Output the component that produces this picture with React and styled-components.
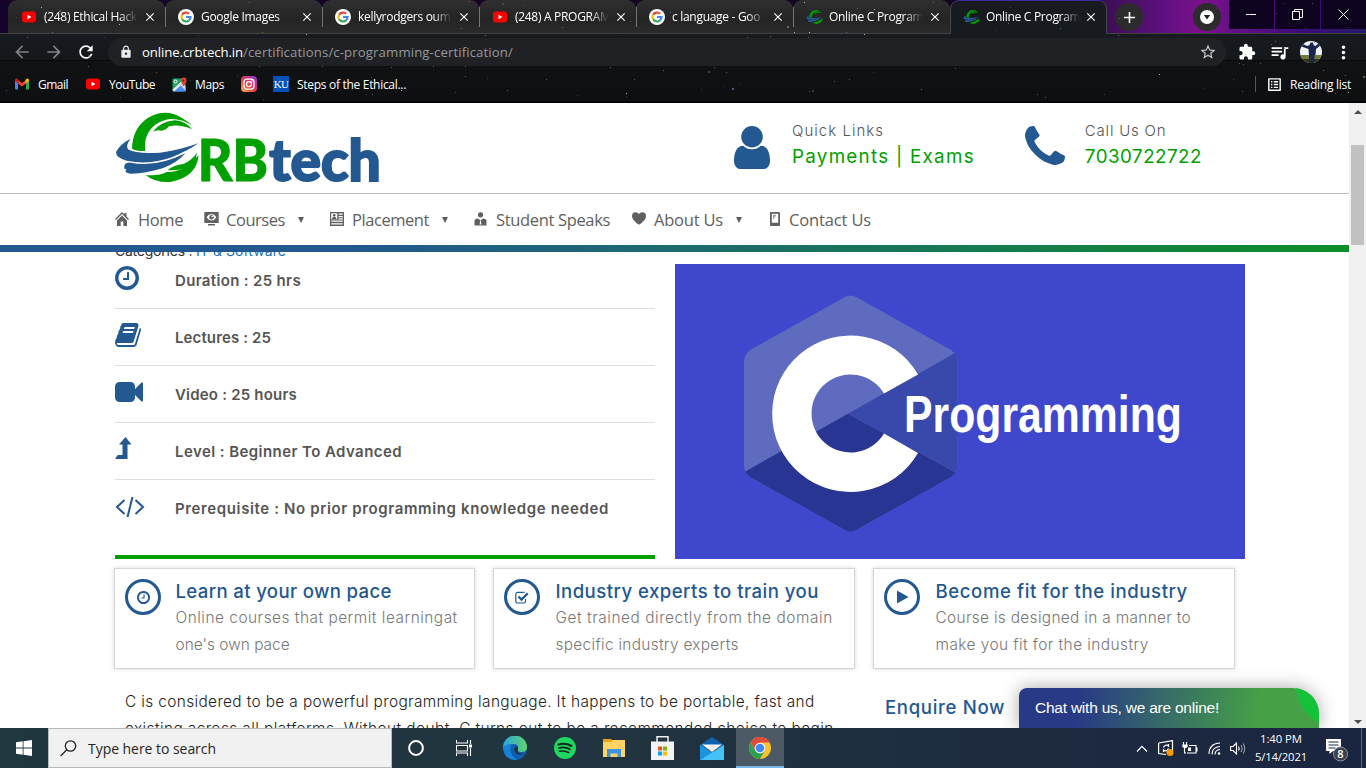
import React from "react";
import styled, { createGlobalStyle, css } from "styled-components";
import {
  MdArrowBack, MdArrowForward, MdRefresh, MdLock, MdStarBorder, MdExtension,
  MdQueueMusic, MdMoreVert, MdClose, MdAdd, MdOutlineListAlt,
} from "react-icons/md";

const UI = `"Open Sans", "Noto Sans", sans-serif`;
const GEO = `Inter, "Open Sans", sans-serif`;
const BLUE = "#235890";
const GREEN = "#00a000";

const Global = createGlobalStyle`
  * { box-sizing: border-box; }
  body { margin: 0; background: #fff; overflow: hidden; }
  svg { display: block; flex: none; }
`;

const Screen = styled.div`
  width: 1366px;
  height: 768px;
  display: flex;
  flex-direction: column;
  overflow: hidden;
  font-family: ${UI};
`;

const T = styled.span`
  white-space: pre;
  letter-spacing: ${(p) => p.$ls || 0}px;
`;

/* ---------- browser ---------- */
const Browser = styled.header`
  position: relative;
  height: 103px;
  flex: none;
  background: linear-gradient(#171a1e 34px, #15181b 60px, #000 60px, #101214 61px, #0d0f11 101px, #000 102px);
  color: #fff;
`;
const Stars = styled.svg`
  position: absolute;
  inset: 0;
  pointer-events: none;
`;
const TabStrip = styled.div`
  height: 34px;
  display: flex;
  align-items: flex-start;
  padding-left: 8px;
  border-bottom: 1px solid #3f4341;
  background: linear-gradient(90deg, #16032a 0, #14041f 950px, #3d0e55 1107px, #5c107c 1160px, #7a128c 1200px, #3d0c78 1300px, #241a6c);
`;
const Tab = styled.div`
  position: relative;
  width: 157px;
  height: 33px;
  flex: none;
  display: flex;
  align-items: center;
  padding: 1px 0 0 13px;
  border-radius: 9px 9px 0 0;
  background: linear-gradient(#2f2f30, #242424 60%, #2b2b2b);
  ${(p) => p.$active && css`
    height: 34px;
    background: #171a1e;
    border: 1px solid #43484a;
    border-top-color: #3d2a9c;
    border-bottom: 0;
    padding: 0 0 1px 12px;
  `}
  ${(p) => p.$line && css`
    &::after { content: ""; position: absolute; right: -1px; top: 7px; width: 1px; height: 20px; background: #75767a; z-index: 1; }
  `}
`;
const TabIcon = styled.div`width: 16px; display: flex; justify-content: center;`;
const TabTitle = styled.div`
  width: 94px;
  margin-left: 7px;
  overflow: hidden;
  font-size: 12px;
  line-height: 18px;
  mask-image: linear-gradient(90deg, #000 80%, transparent 100%);
`;
const TabClose = styled.div`margin-left: ${(p) => (p.$active ? 4 : 5)}px; display: flex; font-size: 14px;`;
const RoundBtn = styled.div`
  width: 28px;
  height: 28px;
  margin: 3px 0 0 ${(p) => p.$ml}px;
  border-radius: 50%;
  background: #2c2c2d;
  display: grid;
  place-items: center;
  font-size: 19px;
`;
const WinControls = styled.div`margin-left: 8px; display: flex; gap: 1px;`;
const WinBtn = styled.div`
  width: 45px;
  height: 29px;
  background: #0f0420;
  display: grid;
  place-items: center;
`;
const Toolbar = styled.div`
  height: 36px;
  display: flex;
  align-items: center;
  padding-left: 6px;
`;
const ToolBtn = styled.div`
  width: 32px;
  display: grid;
  place-items: center;
  font-size: ${(p) => p.$size || 20}px;
  color: ${(p) => (p.$dim ? "#808285" : "#fff")};
`;
const Omnibox = styled.div`
  position: relative;
  width: 1118px;
  height: 28px;
  margin: 0 5px 0 6px;
  border-radius: 14px;
  background: #202124;
  display: flex;
  align-items: center;
  padding: 0 9px 0 11px;
  font-size: 13.2px;
`;
const Url = styled.div`flex: 1; margin-left: 9px; color: #fff;`;
const UrlPath = styled(T)`color: #95989b;`;
const Bookmarks = styled.div`
  height: 28px;
  display: flex;
  align-items: center;
  font-size: 12px;
  padding-left: 15px;
`;
const Bookmark = styled.div`
  display: flex;
  align-items: center;
  gap: ${(p) => p.$gap || 8}px;
  margin-right: ${(p) => p.$mr || 0}px;
`;
const ReadingList = styled.div`
  margin-left: auto;
  padding: 0 15px 0 10px;
  border-left: 1px solid #55585b;
  height: 16px;
  display: flex;
  align-items: center;
  gap: 7px;
  font-size: 12px;
`;

/* ---------- page ---------- */
const Viewport = styled.div`
  position: relative;
  height: 625px;
  display: flex;
  background: #fff;
`;
const Page = styled.div`width: 1349px; height: 625px; overflow: hidden;`;
const Head = styled.div`
  height: 91px;
  border-bottom: 1px solid #bfbfbf;
  display: flex;
  padding-left: 115px;
`;
const Contact = styled.div`display: flex; margin-left: ${(p) => p.$ml}px; padding-top: 18px;`;
const ContactIcon = styled.div`width: ${(p) => p.$w}px; padding-top: ${(p) => p.$top}px;`;
const ContactBody = styled.div`display: flex; flex-direction: column; font-family: ${GEO};`;
const Small = styled(T)`font-size: 15px; line-height: 20px; font-weight: 300; color: #555;`;
const Strong = styled(T)`font-size: 18.8px; line-height: 30px; margin-top: 1px; color: ${GREEN};`;
const Nav = styled.nav`
  height: 51px;
  display: flex;
  align-items: center;
  padding-left: 115px;
  color: #606060;
  font-size: 16.5px;
`;
const NavItem = styled.div`
  display: flex;
  align-items: center;
  width: ${(p) => p.$w}px;
`;
const NavIcon = styled.div`width: ${(p) => p.$w}px; padding-bottom: 2px;`;
const Caret = styled.i`
  margin-left: 13px;
  border: solid transparent;
  border-width: 6px 3.5px 0;
  border-top-color: #5c5c5c;
`;
const Strip = styled.div`height: 7px; background: linear-gradient(90deg, ${BLUE} 25%, #0f8d2a);`;
const Content = styled.main`
  height: 476px;
  overflow: hidden;
  padding-left: 115px;
`;
const Category = styled.div`
  margin-top: -11px;
  height: 20px;
  line-height: 20px;
  font-family: ${GEO};
  font-size: 14px;
  color: #333;
  a { color: #1a75bb; }
`;
const Hero = styled.section`display: flex; gap: 20px; margin-top: 3px; height: 295px;`;
const Specs = styled.div`
  width: 540px;
  height: 295px;
  border-bottom: 4px solid ${GREEN};
`;
const Spec = styled.div`
  height: 57px;
  margin-top: ${(p) => (p.$first ? -12 : 0)}px;
  padding-top: ${(p) => (p.$last ? 0 : 2)}px;
  border-bottom: ${(p) => (p.$last ? 0 : 1)}px solid #ddd;
  display: flex;
  align-items: center;
  font: 600 15px/20px ${GEO};
  color: #555;
`;
const SpecIcon = styled.div`
  width: 60px;
  height: 30px;
  display: flex;
  align-items: center;
  padding-bottom: ${(p) => p.$up}px;
  color: ${BLUE};
`;
const Cards = styled.section`display: flex; gap: 18px; margin: 9px 0 0 -1px;`;
const Card = styled.div`
  width: ${(p) => p.$w}px;
  height: 101px;
  border: 1px solid #d6d6d6;
  box-shadow: 0 0 4px rgba(0, 0, 0, 0.16);
  padding: 10px 0 0 10px;
  display: flex;
`;
const Ring = styled.div`
  width: 36px;
  height: 36px;
  border: 3px solid ${BLUE};
  border-radius: 50%;
  display: grid;
  place-items: center;
  color: ${BLUE};
  margin-right: ${(p) => p.$mr}px;
`;
const CardBody = styled.div`display: flex; flex-direction: column; font-family: ${GEO};`;
const CardTitle = styled(T)`font-size: 18.6px; line-height: 24px; margin-bottom: 1px; font-weight: 500; color: ${BLUE};`;
const CardText = styled(T)`font-size: 15.4px; line-height: 27px; font-weight: 300; color: #777;`;
const Lower = styled.section`display: flex; padding: 19px 0 0 10px; font-family: ${GEO};`;
const Para = styled.div`
  width: 760px;
  font-size: 15.4px;
  line-height: 27px;
  font-weight: 300;
  color: #222;
  display: flex;
  flex-direction: column;
`;
const Enquire = styled(T)`font-size: 18.6px; line-height: 38px; font-weight: 500; color: ${BLUE};`;
const ScrollTrack = styled.div`
  width: 17px;
  background: #f1f1f1;
  display: flex;
  flex-direction: column;
  align-items: center;
  padding: 7px 0 4px;
`;
const Arrow = styled.i`
  border: solid transparent;
  border-width: 0 4px 4px;
  border-bottom-color: #505050;
  ${(p) => p.$down && css`margin-top: auto; transform: scaleY(-1);`}
`;
const Thumb = styled.div`width: 13px; height: 100px; margin-top: 31px; background: #c1c1c1;`;
const Chat = styled.div`
  position: absolute;
  left: 1019px;
  bottom: 0;
  width: 300px;
  height: 40px;
  border-radius: 8px 26px 0 0;
  overflow: hidden;
  background: linear-gradient(95deg, #283a86 20%, #46a146 80%);
  color: #fff;
  font: 15.5px/40px "Liberation Sans", Arial, sans-serif;
  padding-left: 16px;
`;
const ChatShadow = styled.div`
  position: absolute;
  left: 1019px;
  bottom: 0;
  width: 300px;
  height: 40px;
  border-radius: 8px 26px 0 0;
  box-shadow: 0 0 18px rgba(0, 0, 0, 0.35);
  clip-path: inset(-30px -30px 0 -30px);
`;
const Leaf = styled.svg`position: absolute; right: 0; top: 0;`;

/* ---------- taskbar ---------- */
const Taskbar = styled.footer`
  height: 40px;
  display: flex;
  background: linear-gradient(90deg, #20373f 0, #21343f 45%, #1e2c40 70%, #1a2540);
  color: #fff;
`;
const Start = styled.div`width: 48px; display: grid; place-items: center;`;
const Search = styled.div`
  width: 344px;
  border: 1px solid #b9b9b9;
  background: #f1f1f1;
  display: flex;
  align-items: center;
  padding-left: 11px;
  gap: 11px;
  font-size: 14px;
  color: #262626;
`;
const TaskButton = styled.div`
  width: ${(p) => p.$w || 49}px;
  display: grid;
  place-items: center;
  ${(p) => p.$on && css`background: #4b5a64; border-bottom: 2px solid #76b9ed; padding-top: 2px;`}
`;
const Tray = styled.div`margin-left: auto; display: flex; align-items: center;`;
const TrayIcon = styled.div`width: ${(p) => p.$w || 24}px; display: grid; place-items: center;`;
const Clock = styled.div`
  width: 66px;
  display: flex;
  flex-direction: column;
  align-items: center;
  font-size: 11.3px;
  line-height: 18px;
`;
const Notice = styled.div`width: 46px; display: flex; justify-content: center; padding-top: 4px; margin-right: 1px;`;
const Peek = styled.div`width: 5px; height: 40px; border-left: 1px solid #59647a;`;

/* ---------- drawings ---------- */
const CrescentArt = () => (
  <>
    <g fill={GREEN}>
      <path d="M96 138Q97 78 143 46Q196 14 246 46Q264 56 277 70Q250 48 210 49Q160 56 141 98Q132 120 136 145Q110 146 96 138Z" />
      <path d="M158 88Q178 58 225 53Q256 55 276 80Q240 64 207 71Q196 84 184 84Q170 81 158 88Z" />
      <path d="M137 217Q176 221 200 208Q245 212 296 158Q290 223 212 238Q165 241 137 217Z" />
      <path d="M203 202Q222 187 250 184Q277 172 291 150Q288 184 258 195Q230 205 203 202Z" />
    </g>
    <g fill={BLUE}>
      <path d="M92 108Q60 124 48 148Q48 166 80 174Q150 188 215 164Q268 142 295 122Q238 143 180 150Q110 155 84 140Q76 128 92 108Z" />
      <path d="M73 198Q70 178 92 180Q168 196 256 152Q232 180 190 196Q130 214 92 213Q70 211 79 200Z" />
    </g>
  </>
);
const LogoSvg = styled.svg`margin-top: 8px; overflow: visible;`;
const Logo = () => (
  <LogoSvg width="267" height="73.5" viewBox="45 25 801 220.5">
    <CrescentArt />
    <g fontFamily="Lato, sans-serif" fontWeight="900" fontSize="174">
      <text x="293" y="236" fill={GREEN} stroke={GREEN} strokeWidth="3" textLength="211" lengthAdjust="spacingAndGlyphs">RB</text>
      <text x="508" y="235" fill={BLUE} stroke={BLUE} strokeWidth="6" textLength="334" lengthAdjust="spacingAndGlyphs">tech</text>
    </g>
  </LogoSvg>
);
const CrbIcon = () => <svg width="17" height="16" viewBox="45 20 255 230"><CrescentArt /></svg>;
const YtIcon = () => (
  <svg width="14" height="12" viewBox="0 0 14 12"><rect y=".5" width="14" height="11" rx="3" fill="#f00" /><path d="M5.5 3.7v4.6L9.4 6z" fill="#fff" /></svg>
);
const GoogleIcon = () => (
  <svg width="16" height="16" viewBox="0 0 32 32">
    <circle cx="16" cy="16" r="16" fill="#fff" />
    <g fill="none" strokeWidth="4.4">
      <path d="M8.2 11.5A9 9 0 0 1 22.3 9.6" stroke="#ea4335" />
      <path d="M8.2 20.5A9 9 0 0 1 8.2 11.5" stroke="#fbbc05" />
      <path d="M22 22.7A9 9 0 0 1 8.2 20.5" stroke="#34a853" />
      <path d="M16 16h9A9 9 0 0 1 22 22.7" stroke="#4285f4" />
    </g>
  </svg>
);
const GmailIcon = () => (
  <svg width="14" height="12" viewBox="0 0 28 22">
    <path d="M0 3v17q0 2 2 2h4V9z" fill="#4285f4" /><path d="M28 3v17q0 2-2 2h-4V9z" fill="#34a853" />
    <path d="M6 3v7l8 6 8-6V3l-8 6z" fill="#ea4335" /><path d="M0 4q0-5 5-3.500L7 3v7L0 5z" fill="#c5221f" /><path d="M28 4q0-5-5-3.500L21 3v7l7-5z" fill="#fbbc04" />
  </svg>
);
const MapsIcon = () => (
  <svg width="15" height="15" viewBox="0 0 30 30">
    <rect x="1" y="3" width="26" height="26" rx="2" fill="#1fa463" /><path d="M1 27L16 13l11 12v4H3z" fill="#4b8df8" /><path d="M1 25L25 3h2v5L4 29z" fill="#e8e8e8" />
    <path d="M15 15l12 12v-9l-7-7z" fill="#d6d6d6" /><circle cx="7" cy="9" r="3" fill="none" stroke="#fff" strokeWidth="2" />
    <path d="M22 18q-1-5-4-8-1-8 5-9 7 0 6 8-4 4-5 9z" fill="#ea4335" /><circle cx="23" cy="7" r="2.200" fill="#7c1d15" />
  </svg>
);
const InstaIcon = () => (
  <svg width="16" height="16" viewBox="0 0 32 32">
    <defs><linearGradient id="ig" x1="0" y1="1" x2="1" y2="0"><stop offset="0" stopColor="#fec053" /><stop offset=".4" stopColor="#f0403f" /><stop offset=".7" stopColor="#c62f93" /><stop offset="1" stopColor="#7040d0" /></linearGradient></defs>
    <rect width="32" height="32" rx="8" fill="url(#ig)" /><rect x="6" y="6" width="20" height="20" rx="6" fill="none" stroke="#fff" strokeWidth="2.500" />
    <circle cx="16" cy="16" r="5" fill="none" stroke="#fff" strokeWidth="2.500" /><circle cx="22" cy="10" r="1.500" fill="#fff" />
  </svg>
);
const KU = styled.div`
  width: 16px; height: 16px; background: #0051ba; color: #fff;
  font: 11px/16px "Liberation Serif", serif; text-align: center; letter-spacing: -0.8px;
`;
const Avatar = () => (
  <svg width="22" height="22" viewBox="0 0 22 22">
    <defs><clipPath id="av"><circle cx="11" cy="11" r="11" /></clipPath></defs>
    <g clipPath="url(#av)"><rect width="22" height="22" fill="#f1f2f4" /><rect y="14" width="22" height="8" fill="#6f7a3c" /><rect y="18" width="22" height="4" fill="#30351f" />
      <path d="M0 2l7.500 3 2-1 1-2.500h2.500l.5 2.500 2 1L19 2l2 2-5 4-.5 6h-1l-.5 8h-3l-.5-6-.5 6H9V14l-.5-6L0 5z" fill="#16264e" /></g>
  </svg>
);
const starColors = ["#fff", "#8a8d92", "#55585c", "#6d7fb8", "#8d7f58", "#4b4e52"];
const stars = Array.from({ length: 170 }, (_, i) => {
  const r = (k) => { const s = Math.sin(i * 12.9898 + k * 78.233) * 43758.5453; return s - Math.floor(s); };
  return { x: Math.floor(r(1) * 1366), y: Math.floor(r(2) * 100), c: starColors[Math.floor(r(3) * 6)], s: r(4) > 0.93 ? 2 : 1 };
});
const StarField = () => (
  <Stars width="1366" height="103">
    {stars.map((s, i) => <rect key={i} x={s.x} y={s.y} width={s.s} height={s.s} fill={s.c} opacity=".65" />)}
  </Stars>
);

const P = ({ d, box, w, h }) => <svg width={w} height={h} viewBox={box} fill="currentColor"><path d={d} /></svg>;
const CLOCK = "M1024 544v448q0 14-9 23t-23 9h-320q-14 0-23-9t-9-23v-64q0-14 9-23t23-9h224v-352q0-14 9-23t23-9h64q14 0 23 9t9 23zm416 352q0-148-73-273t-198-198-273-73-273 73-198 198-73 273 73 273 198 198 273 73 273-73 198-198 73-273zm224 0q0 209-103 385.500t-279.500 279.500-385.500 103-385.500-103-279.500-279.500-103-385.500 103-385.500 279.500-279.500 385.500-103 385.500 103 279.500 279.500 103 385.500z";
const BOOK = "M1703 478q40 57 18 129l-275 906q-19 64-76.500 107.500t-122.500 43.500h-923q-77 0-148.500-53.500t-99.500-131.500q-24-67-2-127 0-4 3-27t4-37q1-8-3-21.500t-3-19.500q2-11 8-21t16.500-23.500 16.500-23.500q23-38 45-91.500t30-91.500q3-10 .5-30t-.5-28q3-11 17-28t17-23q21-36 42-92t25-90q1-9-2.500-32t.5-28q4-13 22-30.500t22-22.500q19-26 42.500-84.500t27.500-96.500q1-8-3-25.500t-2-26.500q2-8 9-18t18-23 17-21q8-12 16.500-30.500t15-35 16-36 19.500-32 26.500-23.500 36-11.500 47.500 5.500l-1 3q38-9 51-9h761q74 0 114 56t18 130l-274 906q-36 119-71.500 153.500t-128.500 34.500h-869q-27 0-38 15-11 16-1 43 24 70 144 70h923q29 0 56-15.500t35-41.500l300-987q7-22 5-57 38 15 59 43zm-1064 2q-4 13 2 22.500t20 9.500h608q13 0 25.500-9.500t16.500-22.500l21-64q4-13-2-22.500t-20-9.500h-608q-13 0-25.500 9.500t-16.500 22.500zm-83 256q-4 13 2 22.500t20 9.500h608q13 0 25.500-9.500t16.500-22.500l21-64q4-13-2-22.500t-20-9.500h-608q-13 0-25.500 9.500t-16.500 22.500z";
const VIDEO = "M1792 352v1088q0 42-39 59-13 5-25 5-27 0-45-19l-403-403v166q0 119-84.500 203.500t-203.500 84.500h-704q-119 0-203.500-84.500t-84.500-203.500v-704q0-119 84.500-203.500t203.500-84.500h704q119 0 203.500 84.500t84.500 203.500v165l403-402q18-19 45-19 12 0 25 5 39 17 39 59z";
const USER = "M1536 1399q0 109-62.500 187t-150.500 78h-854q-88 0-150.500-78t-62.500-187q0-85 8.500-160.500t31.500-152 58.500-131 94-89 134.500-34.500q131 128 313 128t313-128q76 0 134.500 34.500t94 89 58.500 131 31.500 152 8.500 160.500zm-256-887q0 159-112.500 271.500t-271.500 112.500-271.500-112.500-112.500-271.500 112.500-271.500 271.500-112.500 271.500 112.500 112.500 271.500z";
const PHONE = "M1408 1112q0 27-10 70.500t-21 68.500q-21 50-122 106-94 51-186 51-27 0-53-3.500t-57.500-12.500-47-14.500-55.500-20.500-49-18q-98-35-175-83-127-79-264-216t-216-264q-48-77-83-175-3-9-18-49t-20.500-55.500-14.500-47-12.500-57.500-3.500-53q0-92 51-186 56-101 106-122 25-11 68.500-21t70.500-10q14 0 21 3 18 6 53 76 11 19 30 54t35 63.500 31 53.500q3 4 17.500 25t21.500 35.500 7 28.500q0 20-28.500 50t-62 55-62 53-28.500 46q0 9 5 22.500t8.500 20.500 14 24 11.500 19q76 137 174 235t235 174q2 1 19 11.500t24 14 20.500 8.500 22.500 5q18 0 46-28.500t53-62 55-62 50-28.500q14 0 28.500 7t35.500 21.500 25 17.500q25 15 53.500 31t63.500 35 54 30q70 35 76 53 3 7 3 21z";

const LevelIcon = () => <svg width="17" height="23" viewBox="0 0 17 23" fill="currentColor"><path d="M10.500 0l6 7.500h-4V22H.8q-.8 0-.5-.8L2.800 18h4.700V7.500H4z" /></svg>;
const CodeIcon = () => <svg width="30" height="22" viewBox="0 0 30 22" fill="none" stroke="currentColor" strokeWidth="2"><path d="M9.500 4L2 11l7.500 7M20.500 4l7.500 7-7.500 7M17.500 1l-5 20" /></svg>;
const CheckIcon = () => <svg width="14" height="13" viewBox="0 0 14 13" fill="none" stroke="currentColor"><path d="M10.500 8v2.200q0 1.800-1.800 1.800H2.600Q.8 12 .8 10.200V3.200q0-1.900 1.800-1.900h7" strokeWidth="1.200" /><path d="M3.500 5.500l3 3 6.300-6.300" strokeWidth="2.300" /></svg>;
const PlayIcon = () => <svg width="13" height="14" viewBox="0 0 13 14" fill="currentColor"><path d="M1 .5v13L12.500 7z" /></svg>;

const CPicture = () => (
  <svg width="570" height="295" viewBox="0 0 570 295">
    <defs><clipPath id="hex"><path d="M170 33Q175.500 30 181 33L276 86Q282.500 91 282.500 98V201Q282.500 209 276 213L181 266Q175.500 269 170 266L75 213Q69 209 69 201V98Q69 91 75 86Z" /></clipPath></defs>
    <rect width="570" height="295" fill="#3f48cc" />
    <g clipPath="url(#hex)">
      <rect x="60" y="20" width="230" height="260" fill="#5f6bbf" />
      <path d="M40 224.500L173 149.800L310 224.500V290H40Z" fill="#283593" />
      <path d="M173 149.800L310 72V224.500Z" fill="#3949ab" />
    </g>
    <path d="M243 110.500A78.200 78.200 0 1 0 243 189L209 169.500A39 39 0 1 1 209 129.500Z" fill="#fff" />
    <text x="229" y="168" fontFamily="Liberation Sans, Arial, sans-serif" fontWeight="700" fontSize="52" fill="#fff" textLength="278" lengthAdjust="spacingAndGlyphs">Programming</text>
  </svg>
);

const HomeI = () => <svg width="14" height="14" viewBox="0 0 14 14" fill="currentColor"><path d="M7 0l2.500 2.500V1h2v3.500L14 7l-1 1-6-6-6 6L0 7z" /><path d="M7 3.500l5 5V14H8.300V9.500H5.700V14H2V8.500z" /></svg>;
const ViewI = () => <svg width="15" height="14" viewBox="0 0 15 14" fill="currentColor"><path fillRule="evenodd" d="M1 0h13q.7 0 .7.700v10.300H.3V.7Q.3 0 1 0zM7.500 2Q4.500 2 2.500 5.200 4.500 8.400 7.500 8.400t5-3.200Q10.500 2 7.500 2z" /><circle cx="7.500" cy="5.200" r="2.200" /><circle cx="8.200" cy="4.600" r=".8" fill="#fff" /><path d="M4 12h7v1.500H4z" /></svg>;
const IdI = () => <svg width="14" height="14" viewBox="0 0 14 14" fill="currentColor"><path fillRule="evenodd" d="M0 0h14v14H0zM1.200 1.200v6h6v-6zM8.500 1.500v1.200h4.300V1.500zM8.500 4v1.200h4.300V4zM8.500 6.300v1.200h4.300V6.300zM1.300 8.600v1.200h11.500V8.600zM1.300 11.200v1.200h11.500v-1.200z" /><path d="M2 7q0-2.500 2.200-2.500T6.400 7z" /><circle cx="4.200" cy="3.200" r="1.300" /></svg>;
const ManI = () => <svg width="13" height="14" viewBox="0 0 13 14" fill="currentColor"><circle cx="6.500" cy="2.800" r="2.600" /><path d="M.5 13.500V9Q.5 6.500 4 6.500l2.500 2 2.500-2q3.500 0 3.500 2.500v4.500z" /><path d="M6.100 8.800h.8l.5 3.700h-1.800z" fill="#fff" /></svg>;
const HeartI = () => <svg width="14" height="13" viewBox="0 0 14 13" fill="currentColor"><path d="M7 12.800Q0 8 0 4.200 0 .3 3.500.3 6 .3 7 2 8 .3 10.500.3 14 .3 14 4.200 14 8 7 12.800z" /></svg>;
const DeviceI = () => <svg width="10" height="14" viewBox="0 0 10 14" fill="currentColor"><path fillRule="evenodd" d="M1 0h8q1 0 1 1v12q0 1-1 1H1q-1 0-1-1V1Q0 0 1 0zM1.800 1.700v9h6.400v-9z" /><path d="M3 2.800h3.500L3 8z" opacity=".6" /></svg>;

const EdgeIcon = () => (
  <svg width="24" height="24" viewBox="0 0 24 24">
    <defs><linearGradient id="eg" x1="0" x2="1"><stop offset="0" stopColor="#2ba5e0" /><stop offset="1" stopColor="#5fd36b" /></linearGradient></defs>
    <circle cx="12" cy="12" r="12" fill="#0f5fb0" /><path d="M0 12A12 12 0 0 1 24 11Q24 16 19 16 14 16 15 13 16 8 10.500 8 4 8 0 12z" fill="url(#eg)" />
    <path d="M0 12Q3 7.500 9 8.500 6.500 11 7.500 15.500 9 21 14 23.800 2 25 0 12z" fill="#1683d8" /><path d="M12.500 10.500Q10.500 12 11.500 15 13.500 19.500 19 18.500L23 16.500Q19 19 15.500 16.500 14 15 15 13 15.500 11 12.500 10.500z" fill="#21363f" />
  </svg>
);
const SpotifyIcon = () => <svg width="22" height="22" viewBox="0 0 22 22"><circle cx="11" cy="11" r="11" fill="#1ed760" /><g fill="none" stroke="#17251e" strokeLinecap="round"><path d="M4.500 7.500q7-2 13 1.500" strokeWidth="2.100" /><path d="M5 11q6-1.600 11 1.300" strokeWidth="1.800" /><path d="M5.500 14.300q5-1.200 9.300 1.200" strokeWidth="1.500" /></g></svg>;
const FolderIcon = () => <svg width="22" height="18" viewBox="0 0 22 18"><path d="M0 0h8l2 2H0z" fill="#e8a317" /><rect y="1" width="22" height="17" fill="#ffd465" /><path d="M0 3h8l2-2H0z" fill="#e8a317" /><path d="M4 10h14v8h-3.500v-3.500h-7V18H4z" fill="#3e95df" /></svg>;
const StoreIcon = () => <svg width="23" height="24" viewBox="0 0 23 24"><path d="M6 7V.8h11V7" fill="none" stroke="#eee" strokeWidth="1.500" /><rect y="5.500" width="23" height="18.500" fill="#f3f3f3" /><path d="M7 10.500h4v4H7z" fill="#f25022" /><path d="M12 10.500h4v4h-4z" fill="#7fba00" /><path d="M7 15.500h4v4H7z" fill="#00a4ef" /><path d="M12 15.500h4v4h-4z" fill="#ffb900" /></svg>;
const MailIcon = () => <svg width="24" height="23" viewBox="0 0 24 23"><path d="M0 8l12-8 12 8v4H0z" fill="#0f62ae" /><path d="M0 8v15h24V8l-12 8z" fill="#27a6ea" /><path d="M24 8v15H0z" fill="#45c2f7" /><path d="M0 8l12 7.500L0 23z" fill="#1b93dd" /><path d="M2 7.500h20L12 15z" fill="#f4f4f4" /></svg>;
const ChromeIcon = () => <svg width="22" height="22" viewBox="0 0 22 22"><circle cx="11" cy="11" r="11" fill="#fbc02d" /><path d="M1.500 5.500A11 11 0 0 1 20.500 5.500H11L6.200 13.800z" fill="#e14b3b" /><path d="M1.500 5.500L6.300 13.700 11 16.500 15.700 13.700 10.900 22A11 11 0 0 1 1.500 5.500z" fill="#2fa04f" /><circle cx="11" cy="11" r="5.300" fill="#fff" /><circle cx="11" cy="11" r="4.300" fill="#4285f4" /></svg>;
const TaskViewIcon = () => <svg width="17" height="16" viewBox="0 0 17 16" fill="none" stroke="#fff"><path d="M.5 0v3h11V0M.5 16v-3h11v3M.5 5.500h11v5.500H.5zM14.500 0v4M14.500 8v8" strokeWidth="1.100" /><rect x="13" y="4.500" width="3" height="3" fill="#fff" stroke="none" /></svg>;

const TABS = [
  { icon: <YtIcon />, title: "(248) Ethical Hack" },
  { icon: <GoogleIcon />, title: "Google Images" },
  { icon: <GoogleIcon />, title: "kellyrodgers oum" },
  { icon: <YtIcon />, title: "(248) A PROGRAM" },
  { icon: <GoogleIcon />, title: "c language - Goo" },
  { icon: <CrbIcon />, title: "Online C Program" },
  { icon: <CrbIcon />, title: "Online C Program", active: true },
];
// icon, label, letter spacing, lift of the icon above the row's middle
const SPECS = [
  [<P d={CLOCK} box="128 128 1536 1536" w={24} h={24} />, "Duration : 25 hrs", 0.337, 6],
  [<P d={BOOK} box="64 128 1664 1536" w={26} h={24} />, "Lectures : 25", 0.12, 6],
  [<P d={VIDEO} box="0 256 1792 1280" w={28} h={20} />, "Video : 25 hours", 0.199, 6],
  [<LevelIcon />, "Level : Beginner To Advanced", 0.428, 7],
  [<CodeIcon />, "Prerequisite : No prior programming knowledge needed", 0.628, 4],
];
// icon, label, letter spacing, icon column, item width, has submenu
const NAV = [
  [<HomeI />, "Home", -0.41, 23, 89],
  [<ViewI />, "Courses", -0.455, 22, 126, true],
  [<IdI />, "Placement", -0.443, 22, 144, true],
  [<ManI />, "Student Speaks", -0.344, 22, 158],
  [<HeartI />, "About Us", -0.205, 22, 138, true],
  [<DeviceI />, "Contact Us", -0.145, 19, 120],
];
const CARDS = [
  [361, 14.5, <P d={CLOCK} box="128 128 1536 1536" w={13} h={13} />, ["Learn at your own pace", 0.34], ["Online courses that permit learningat", 0.51], ["one's own pace", 0.02]],
  [362, 15.5, <CheckIcon />, ["Industry experts to train you", 0.45], ["Get trained directly from the domain", 0.56], ["specific industry experts", 0.31]],
  [362, 15.5, <PlayIcon />, ["Become fit for the industry", 0.57], ["Course is designed in a manner to", 0.33], ["make you fit for the industry", 0.45]],
];

export default function App() {
  return (
    <Screen>
      <Global />
      <Browser>
        <TabStrip>
          {TABS.map((t, i) => (
            <Tab key={i} $active={t.active} $line={i < 5}>
              <TabIcon>{t.icon}</TabIcon>
              <TabTitle><T $ls={-0.3}>{t.title}</T></TabTitle>
              <TabClose $active={t.active}><MdClose /></TabClose>
            </Tab>
          ))}
          <RoundBtn $ml={8}><MdAdd /></RoundBtn>
          <RoundBtn $ml={50}><svg width="14" height="14"><circle cx="7" cy="7" r="7" fill="#fff" /><path d="M3.800 5h6.400L7 9.500z" fill="#222" /></svg></RoundBtn>
          <WinControls>
            <WinBtn><svg width="11" height="11" stroke="#fff"><path d="M0 5.500h10" /></svg></WinBtn>
            <WinBtn><svg width="11" height="11" stroke="#fff" fill="none"><path d="M.5 2.500h7v8h-7zM2.500 2.500v-2h8v8h-3" /></svg></WinBtn>
            <WinBtn><svg width="11" height="11" stroke="#fff"><path d="M.5.5l10 10M10.500.5l-10 10" /></svg></WinBtn>
          </WinControls>
        </TabStrip>
        <StarField />
        <Toolbar>
          <ToolBtn $dim><MdArrowBack /></ToolBtn>
          <ToolBtn $dim><MdArrowForward /></ToolBtn>
          <ToolBtn><MdRefresh /></ToolBtn>
          <Omnibox>
            <MdLock size={14} color="#e8eaed" />
            <Url><T $ls={-0.107}>online.crbtech.in</T><UrlPath $ls={0.112}>/certifications/c-programming-certification/</UrlPath></Url>
            <MdStarBorder size={18} color="#c8cacd" />
          </Omnibox>
          <ToolBtn $size={18}><MdExtension /></ToolBtn>
          <ToolBtn $size={21}><MdQueueMusic /></ToolBtn>
          <ToolBtn><Avatar /></ToolBtn>
          <ToolBtn $size={21}><MdMoreVert /></ToolBtn>
        </Toolbar>
        <Bookmarks>
          <Bookmark $mr={18} $gap={9}><GmailIcon /><T $ls={-0.512}>Gmail</T></Bookmark>
          <Bookmark $mr={17} $gap={9}><YtIcon /><T $ls={-0.478}>YouTube</T></Bookmark>
          <Bookmark $mr={17}><MapsIcon /><T $ls={-0.383}>Maps</T></Bookmark>
          <Bookmark $mr={16}><InstaIcon /></Bookmark>
          <Bookmark><KU>KU</KU><T $ls={-0.299}>Steps of the Ethical...</T></Bookmark>
          <ReadingList><MdOutlineListAlt size={17} /><T $ls={-0.27}>Reading list</T></ReadingList>
        </Bookmarks>
      </Browser>

      <Viewport>
        <Page>
          <Head>
            <Logo />
            <Contact $ml={352}>
              <ContactIcon $w={58} $top={5}><svg width="36" height="43" viewBox="256 128 1280 1536" preserveAspectRatio="none" fill={BLUE}><path d={USER} /></svg></ContactIcon>
              <ContactBody><Small $ls={1.03}>Quick Links</Small><Strong $ls={1.274}>Payments | Exams</Strong></ContactBody>
            </Contact>
            <Contact $ml={50}>
              <ContactIcon $w={60} $top={5}><svg width="40" height="39" viewBox="0 0 1408 1408" preserveAspectRatio="none" fill={BLUE}><path d={PHONE} /></svg></ContactIcon>
              <ContactBody><Small $ls={0.8}>Call Us On</Small><Strong $ls={0.48}>7030722722</Strong></ContactBody>
            </Contact>
          </Head>
          <Nav>
            {NAV.map(([icon, label, ls, iw, total, caret]) => (
              <NavItem key={label} $w={total}><NavIcon $w={iw}>{icon}</NavIcon><T $ls={ls}>{label}</T>{caret && <Caret />}</NavItem>
            ))}
          </Nav>
          <Strip />
          <Content>
            <Category><T $ls={-0.232}>Categories : </T><a><T $ls={0.071}>IT &amp; Software</T></a></Category>
            <Hero>
              <Specs>
                {SPECS.map(([icon, label, ls, up], i) => (
                  <Spec key={label} $first={i === 0} $last={i === 4}><SpecIcon $up={up}>{icon}</SpecIcon><T $ls={ls}>{label}</T></Spec>
                ))}
              </Specs>
              <CPicture />
            </Hero>
            <Cards>
              {CARDS.map(([w, mr, icon, t, a, b]) => (
                <Card key={t[0]} $w={w}>
                  <Ring $mr={mr}>{icon}</Ring>
                  <CardBody><CardTitle $ls={t[1]}>{t[0]}</CardTitle><CardText $ls={a[1]}>{a[0]}</CardText><CardText $ls={b[1]}>{b[0]}</CardText></CardBody>
                </Card>
              ))}
            </Cards>
            <Lower>
              <Para>
                <T $ls={0.374}>C is considered to be a powerful programming language. It happens to be portable, fast and</T>
                <T $ls={0.41}>existing across all platforms. Without doubt, C turns out to be a recommended choice to begin</T>
              </Para>
              <Enquire $ls={0.66}>Enquire Now</Enquire>
            </Lower>
          </Content>
        </Page>
        <ScrollTrack><Arrow /><Thumb /><Arrow $down /></ScrollTrack>
        <ChatShadow />
        <Chat>
          <T $ls={-0.229}>Chat with us, we are online!</T>
          <Leaf width="24" height="36"><path d="M1 0H24V35Q4 24 1 0z" fill="#16c13a" /></Leaf>
        </Chat>
      </Viewport>

      <Taskbar>
        <Start><svg width="16" height="16" viewBox="0 0 16 16" fill="#fff"><path d="M0 2.200L6.700 1.300v6.300H0zM7.500 1.200L16 0v7.600H7.500zM0 8.400h6.700v6.300L0 13.800zM7.500 8.400H16V16l-8.500-1.200z" /></svg></Start>
        <Search>
          <svg width="17" height="17" fill="none" stroke="#222" strokeWidth="1.300"><circle cx="10.500" cy="6" r="5.200" /><path d="M6.800 9.700L.6 16" /></svg>
          <T $ls={-0.044}>Type here to search</T>
        </Search>
        <TaskButton $w={48}><svg width="16" height="16"><circle cx="8" cy="8" r="6.900" fill="none" stroke="#fff" strokeWidth="2" /></svg></TaskButton>
        <TaskButton><TaskViewIcon /></TaskButton>
        <TaskButton $w={51}><EdgeIcon /></TaskButton>
        <TaskButton><SpotifyIcon /></TaskButton>
        <TaskButton><FolderIcon /></TaskButton>
        <TaskButton><StoreIcon /></TaskButton>
        <TaskButton><MailIcon /></TaskButton>
        <TaskButton $w={48} $on><ChromeIcon /></TaskButton>
        <Tray>
          <TrayIcon><svg width="12" height="7" fill="none" stroke="#fff" strokeWidth="1.200"><path d="M1 6.500L6 1.300l5 5.200" /></svg></TrayIcon>
          <TrayIcon><svg width="16" height="16" fill="none" stroke="#fff"><path d="M.6 3L14.500.6V11M8 14.500L.6 13.500V3" strokeWidth="1.200" /><path d="M5.500 7.500a3 3 0 0 1 5-1.500V4M10.500 8.500a3 3 0 0 1-5 1.500v2" strokeWidth="1.200" /><circle cx="12" cy="12.500" r="3.500" fill="#ff9800" stroke="none" /></svg></TrayIcon>
          <TrayIcon><svg width="16" height="13" fill="none" stroke="#fff"><path d="M7 3.500h7v7.500H5M2.500 6v5H4M1.500 0v3M4.500 0v3" strokeWidth="1.100" /><path d="M.3 2.500h5.400v2q-1 1.800-2.700 1.800T.3 4.500z" fill="#fff" stroke="none" /><rect x="14" y="5.500" width="1.500" height="4" fill="#fff" stroke="none" /><rect x="6" y="5.500" width="3" height="3.500" fill="#fff" stroke="none" /></svg></TrayIcon>
          <TrayIcon $w={25}><svg width="13" height="13" fill="none" stroke="#fff" strokeWidth="1.100"><path d="M1 12Q1 1.500 12 1M4 12.500Q4 5 12 4.500M7 12.500Q7 8 12 7.500" /><circle cx="11" cy="11.500" r="1.300" fill="#fff" stroke="none" /></svg></TrayIcon>
          <TrayIcon $w={21}><svg width="16" height="13" fill="none" stroke="#fff" strokeWidth="1.100"><path d="M.6 4.500h2.500L6.500 1v11L3.100 8.500H.6z" /><path d="M8.500 4.500q1.300 2 0 4" /><path d="M11 3q2 3.500 0 7M13.300 1.500q2.800 5 0 10" opacity=".55" /></svg></TrayIcon>
          <Clock><T $ls={-0.036}>1:40 PM</T><T $ls={-0.168}>5/14/2021</T></Clock>
          <Notice><svg width="24" height="25"><path d="M1 1h15v12h-8l-3.500 3v-3H1z" fill="#fff" /><path d="M3.500 4h10M3.500 7h10M3.500 10h7" stroke="#1d2b44" /><circle cx="15.500" cy="16" r="7" fill="#3a3f4b" stroke="#8d939f" /><text x="15.500" y="20" fontSize="11" fontWeight="600" textAnchor="middle" fill="#fff" fontFamily="Open Sans, sans-serif">8</text></svg></Notice>
          <Peek />
        </Tray>
      </Taskbar>
    </Screen>
  );
}
